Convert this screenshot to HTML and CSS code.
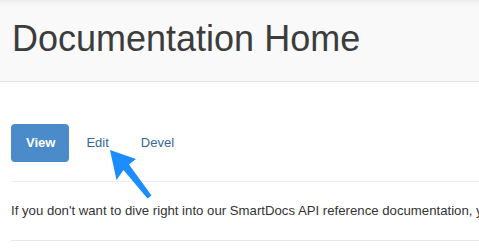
FILE: index.html
```html
<!DOCTYPE html>
<html>
<head>
<meta charset="utf-8">
<link rel="stylesheet" href="styles.css">
</head>
<body>
<header class="page-header">
  <h1 class="title">Documentation Home</h1>
</header>
<main class="content">
  <nav class="pills">
    <a class="pill active" href="#">View</a>
    <a class="pill" href="#">Edit</a>
    <a class="pill" href="#">Devel</a>
  </nav>
  <hr class="rule rule-top">
  <p class="intro">If you don't want to dive right into our SmartDocs API reference documentation, you can start with an overview of the product.</p>
  <hr class="rule rule-bottom">
</main>
<svg class="arrow" width="60" height="62" viewBox="0 0 60 62" aria-hidden="true">
  <path d="M10 10 L36 19 L29 24.5 L51.5 55.5 L47.5 58.5 L23.5 30 L16.5 40 Z" fill="#1b8dff"/>
</svg>
</body>
</html>
```

FILE: styles.css
```css
html, body {
  margin: 0;
  padding: 0;
  background: #ffffff;
  overflow: hidden;
}

body {
  position: relative;
  font-family: "Liberation Sans", Arial, sans-serif;
  color: #333333;
}

.page-header {
  background: linear-gradient(to bottom, #ececec 0px, #f6f6f6 4px, #f9f9f9 8px, #f9f9f9 100%);
  border-bottom: 1px solid #e3e3e3;
  height: 82px;
  box-sizing: border-box;
  padding: 19px 0 0 12px;
}

.title {
  margin: 0;
  font-size: 36px;
  line-height: 40px;
  font-weight: normal;
  color: #3c3c3c;
  white-space: nowrap;
}

.content {
  padding: 42px 0 0 11px;
}

.pills {
  display: flex;
  gap: 2px;
}

.pill {
  display: block;
  font-size: 13px;
  line-height: 20px;
  padding: 9px 15px;
  border-radius: 4px;
  color: #36689a;
  text-decoration: none;
}

.pill.active {
  background: #4b8bc9;
  color: #ffffff;
  font-weight: bold;
  padding: 9px 14px 9px 15px;
}

.rule {
  border: 0;
  height: 1px;
  margin: 0;
  margin-right: -20px;
}

.rule-top {
  background: #ececec;
  margin-top: 19px;
}

.rule-bottom {
  background: #e6e6e6;
  margin-top: 20px;
}

.intro {
  margin: 20px 0 0 0;
  font-size: 13.2px;
  line-height: 18px;
  white-space: nowrap;
  color: #333333;
}

.arrow {
  position: absolute;
  left: 100px;
  top: 140px;
}
```
